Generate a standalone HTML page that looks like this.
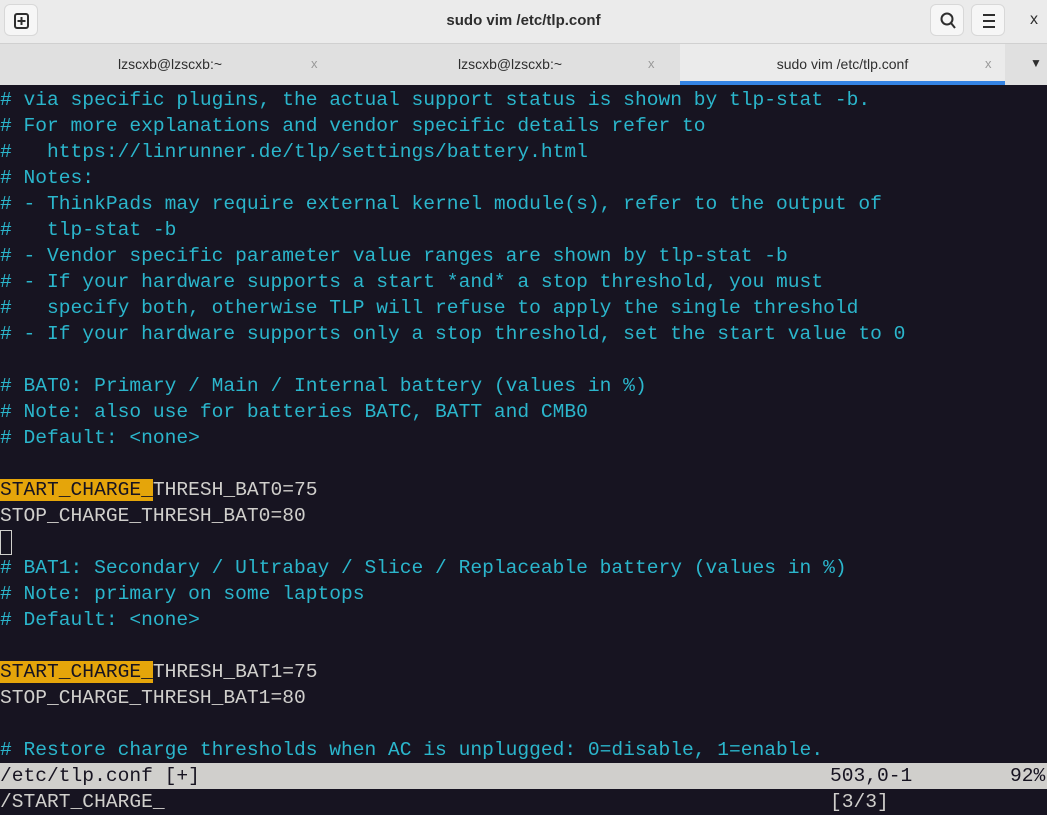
<!DOCTYPE html>
<html><head><meta charset="utf-8"><style>
*{margin:0;padding:0;box-sizing:border-box}
body{width:1047px;height:812px;overflow:hidden;background:#171421;font-family:"Liberation Sans",sans-serif;position:relative}
#hdr{position:absolute;left:0;top:0;width:1047px;height:44px;background:#ebebeb;border-bottom:1px solid #d0d0d0}
#title{position:absolute;left:0;width:1047px;top:12px;text-align:center;font-size:15px;font-weight:bold;color:#2e2e2e}
.btn{position:absolute;top:4px;width:34px;height:32px;border-radius:6px;background:#f6f6f6;border:1px solid #d8d8d8}
#tabs{position:absolute;left:0;top:44px;width:1047px;height:41px;background:#e0e0e0}
.tab{position:absolute;top:0;height:41px;font-size:14px;color:#2e2e2e;line-height:40px}
.tab .x{position:absolute;color:#999;font-size:13px}
#term{position:absolute;left:0;top:87px;width:1047px;font-family:"Liberation Mono",monospace;font-size:19.6px;line-height:26px;color:#d0cfcc}
.c{color:#2bb6cc}
.hl{background:#e5a50a;color:#171421}
.row{height:26px;position:relative;white-space:pre}
#status{background:#d0cfcc;color:#171421}
</style></head><body>
<div id="hdr">
 <div class="btn" style="left:4px;"><svg width="34" height="32" viewBox="0 0 34 32"><rect x="10" y="9" width="13" height="14" rx="2" fill="none" stroke="#2e2e2e" stroke-width="2"/><path d="M16.5 12v8M12.5 16h8" stroke="#2e2e2e" stroke-width="2"/></svg></div>
 <div id="title">sudo vim /etc/tlp.conf</div>
 <div class="btn" style="left:930px;"><svg width="34" height="32" viewBox="0 0 34 32"><circle cx="16" cy="14" r="5.5" fill="none" stroke="#2e2e2e" stroke-width="2"/><path d="M20 18l4 5" stroke="#2e2e2e" stroke-width="2"/></svg></div>
 <div class="btn" style="left:971px;"><svg width="34" height="32" viewBox="0 0 34 32"><path d="M11 10h12M11 16h12M11 22h12" stroke="#2e2e2e" stroke-width="2"/></svg></div>
 <div style="position:absolute;left:1030px;top:11px;font-size:16px;color:#2e2e2e">x</div>
</div>
<div id="tabs">
 <div class="tab" style="left:0;width:340px;text-align:center">lzscxb@lzscxb:~<span class="x" style="left:311px">x</span></div>
 <div class="tab" style="left:340px;width:340px;text-align:center">lzscxb@lzscxb:~<span class="x" style="left:308px">x</span></div>
 <div class="tab" style="left:680px;width:325px;background:#ebebeb;text-align:center">sudo vim /etc/tlp.conf<span class="x" style="left:305px">x</span><div style="position:absolute;left:0;bottom:0;width:325px;height:4px;background:#3584e4"></div></div>
 <div style="position:absolute;left:1030px;top:12px;font-size:12px;color:#2e2e2e">▼</div>
</div>
<div id="term"><div class="row c"># via specific plugins, the actual support status is shown by tlp-stat -b.</div><div class="row c"># For more explanations and vendor specific details refer to</div><div class="row c">#   https://linrunner.de/tlp/settings/battery.html</div><div class="row c"># Notes:</div><div class="row c"># - ThinkPads may require external kernel module(s), refer to the output of</div><div class="row c">#   tlp-stat -b</div><div class="row c"># - Vendor specific parameter value ranges are shown by tlp-stat -b</div><div class="row c"># - If your hardware supports a start *and* a stop threshold, you must</div><div class="row c">#   specify both, otherwise TLP will refuse to apply the single threshold</div><div class="row c"># - If your hardware supports only a stop threshold, set the start value to 0</div><div class="row"> </div><div class="row c"># BAT0: Primary / Main / Internal battery (values in %)</div><div class="row c"># Note: also use for batteries BATC, BATT and CMB0</div><div class="row c"># Default: &lt;none&gt;</div><div class="row"> </div><div class="row"><span class="hl">START_CHARGE_</span>THRESH_BAT0=75</div><div class="row">STOP_CHARGE_THRESH_BAT0=80</div><div class="row"><span style="display:inline-block;width:12px;height:25px;border:1.5px solid #d0cfcc;vertical-align:top;margin-top:1px"></span></div><div class="row c"># BAT1: Secondary / Ultrabay / Slice / Replaceable battery (values in %)</div><div class="row c"># Note: primary on some laptops</div><div class="row c"># Default: &lt;none&gt;</div><div class="row"> </div><div class="row"><span class="hl">START_CHARGE_</span>THRESH_BAT1=75</div><div class="row">STOP_CHARGE_THRESH_BAT1=80</div><div class="row"> </div><div class="row c"># Restore charge thresholds when AC is unplugged: 0=disable, 1=enable.</div><div class="row" id="status">/etc/tlp.conf [+]<span style="position:absolute;left:830px">503,0-1</span><span style="position:absolute;left:1010px">92%</span></div><div class="row">/START_CHARGE_<span style="position:absolute;left:830px">[3/3]</span></div></div>
</body></html>
